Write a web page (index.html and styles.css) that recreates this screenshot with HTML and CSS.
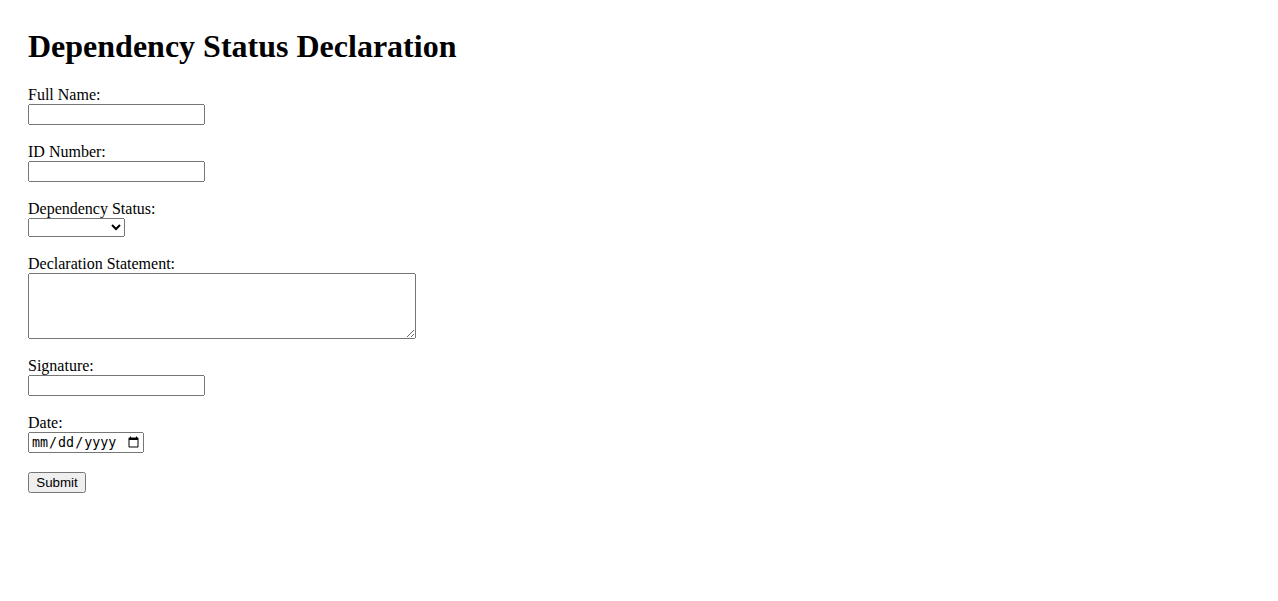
FILE: index.html
```html
<!DOCTYPE html>
<html lang="en">
<head>
    <meta charset="UTF-8">
    <meta name="viewport" content="width=device-width, initial-scale=1.0">
    <title>Dependency Status Declaration</title>
    <link rel="stylesheet" href="styles.css">
</head>
<body>
    <h1>Dependency Status Declaration</h1>

    <form>
        <div class="field">
            <label for="fullName">Full Name:</label>
            <input type="text" id="fullName" name="fullName">
        </div>

        <div class="field">
            <label for="idNumber">ID Number:</label>
            <input type="text" id="idNumber" name="idNumber">
        </div>

        <div class="field">
            <label for="status">Dependency Status:</label>
            <select id="status" name="status">
                <option value=""></option>
                <option value="dependent">Dependent</option>
                <option value="independent">Independent</option>
            </select>
        </div>

        <div class="field">
            <label for="statement">Declaration Statement:</label>
            <textarea id="statement" name="statement" rows="4" cols="50"></textarea>
        </div>

        <div class="field">
            <label for="signature">Signature:</label>
            <input type="text" id="signature" name="signature">
        </div>

        <div class="field field-last">
            <label for="date">Date:</label>
            <input type="date" id="date" name="date">
        </div>

        <button type="submit">Submit</button>
    </form>
</body>
</html>
```

FILE: styles.css
```css
body {
    font-family: 'Liberation Serif', 'Times New Roman', serif;
    font-size: 16px;
    margin: 8px;
    padding: 20px;
    color: #000;
    background-color: #fff;
}
h1 {
    font-size: 32px;
    font-weight: bold;
    margin: 0 0 21px;
}
label {
    display: block;
}
.field {
    margin-bottom: 18px;
}
.field-last {
    margin-bottom: 19px;
}
input,
select,
textarea,
button {
    font-family: 'Liberation Sans', Arial, sans-serif;
    font-size: 13.33px;
    display: block;
}
input[type="text"] {
    width: 177px;
    height: 21px;
    box-sizing: border-box;
}
select {
    width: 97px;
    height: 19px;
    box-sizing: border-box;
}
textarea {
    width: 388px;
    height: 66px;
    box-sizing: border-box;
}
input[type="date"] {
    width: 116px;
    height: 21px;
    box-sizing: border-box;
    font-family: 'DejaVu Sans Mono', monospace;
}
button {
    width: 58px;
    height: 21px;
    box-sizing: border-box;
    padding: 1px 6px;
}
```
